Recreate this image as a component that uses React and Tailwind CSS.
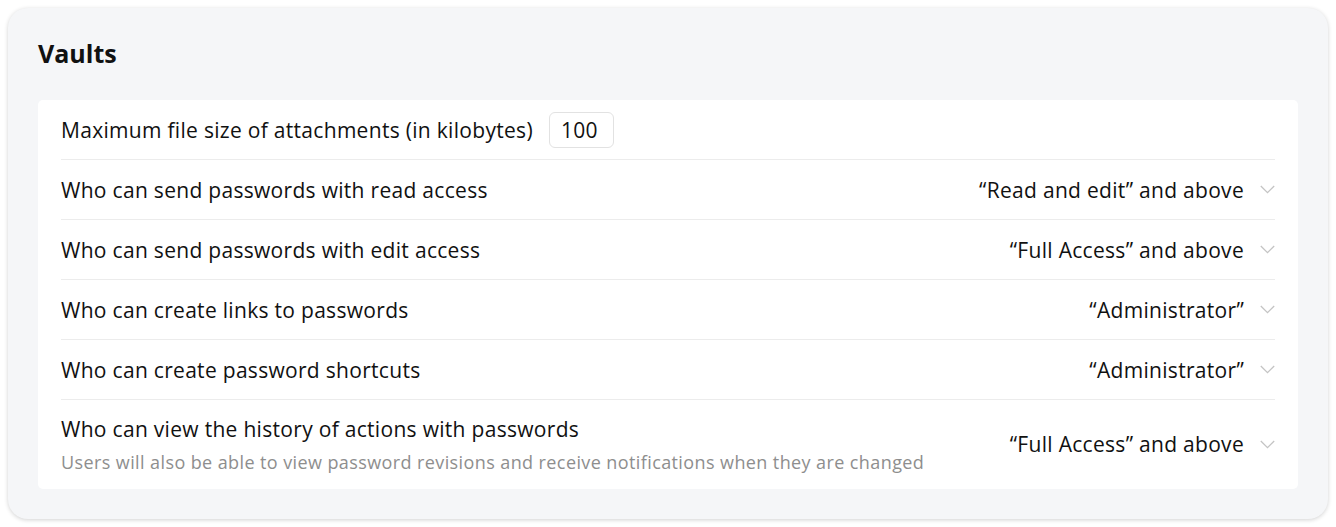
import React from "react";

const Chevron = () => (
  <svg width="15" height="9" viewBox="0 0 15 9" fill="none" className="shrink-0">
    <path d="M0.8 1 L7.5 7.7 L14.2 1" stroke="#c4c4c4" strokeWidth="1.3" />
  </svg>
);

const rows = [
  { label: "Who can send passwords with read access", value: "\u201cRead and edit\u201d and above" },
  { label: "Who can send passwords with edit access", value: "\u201cFull Access\u201d and above" },
  { label: "Who can create links to passwords", value: "\u201cAdministrator\u201d" },
  { label: "Who can create password shortcuts", value: "\u201cAdministrator\u201d" },
];

export default function App() {
  return (
    <div className="bg-white p-2 w-[1336px] h-[527px]" style={{ fontFamily: "'Open Sans', sans-serif" }}>
      <div className="bg-[#f5f6f8] rounded-[20px] shadow-[0_1px_4px_rgba(0,0,0,0.18)] h-[511px] px-[30px] pt-[30px]">
        <h1 className="text-[25px] font-bold text-[#111] leading-[30px] h-[62px]">Vaults</h1>
        <div className="bg-white rounded-[5px] px-[23px] pb-[1px]">
          <div className="flex items-center h-[60px] border-b border-[#ececec] text-[21px] tracking-[0.3px] text-[#111]">
            <span className="pt-[2px]">Maximum file size of attachments (in kilobytes)</span>
            <div className="ml-4 h-[36px] w-[65px] border border-[#e2e2e2] rounded-[6px] flex items-center px-[11px] pt-[2px]">100</div>
          </div>
          {rows.map((r) => (
            <div key={r.label} className="flex items-center h-[60px] border-b border-[#ececec] text-[21px] tracking-[0.3px] text-[#111]">
              <span className="flex-1 pt-[2px]">{r.label}</span>
              <span className="pt-[2px]">{r.value}</span>
              <span className="ml-[16px]"><Chevron /></span>
            </div>
          ))}
          <div className="flex items-center h-[88px] text-[#111] tracking-[0.3px]">
            <div className="flex-1 flex flex-col">
              <span className="text-[21px] leading-[28px]">Who can view the history of actions with passwords</span>
              <span className="text-[18px] leading-[24px] tracking-[0.4px] text-[#8e8e8e] mt-[7px]">Users will also be able to view password revisions and receive notifications when they are changed</span>
            </div>
            <span className="text-[21px] pt-[2px]">{"\u201cFull Access\u201d and above"}</span>
            <span className="ml-[16px]"><Chevron /></span>
          </div>
        </div>
      </div>
    </div>
  );
}
